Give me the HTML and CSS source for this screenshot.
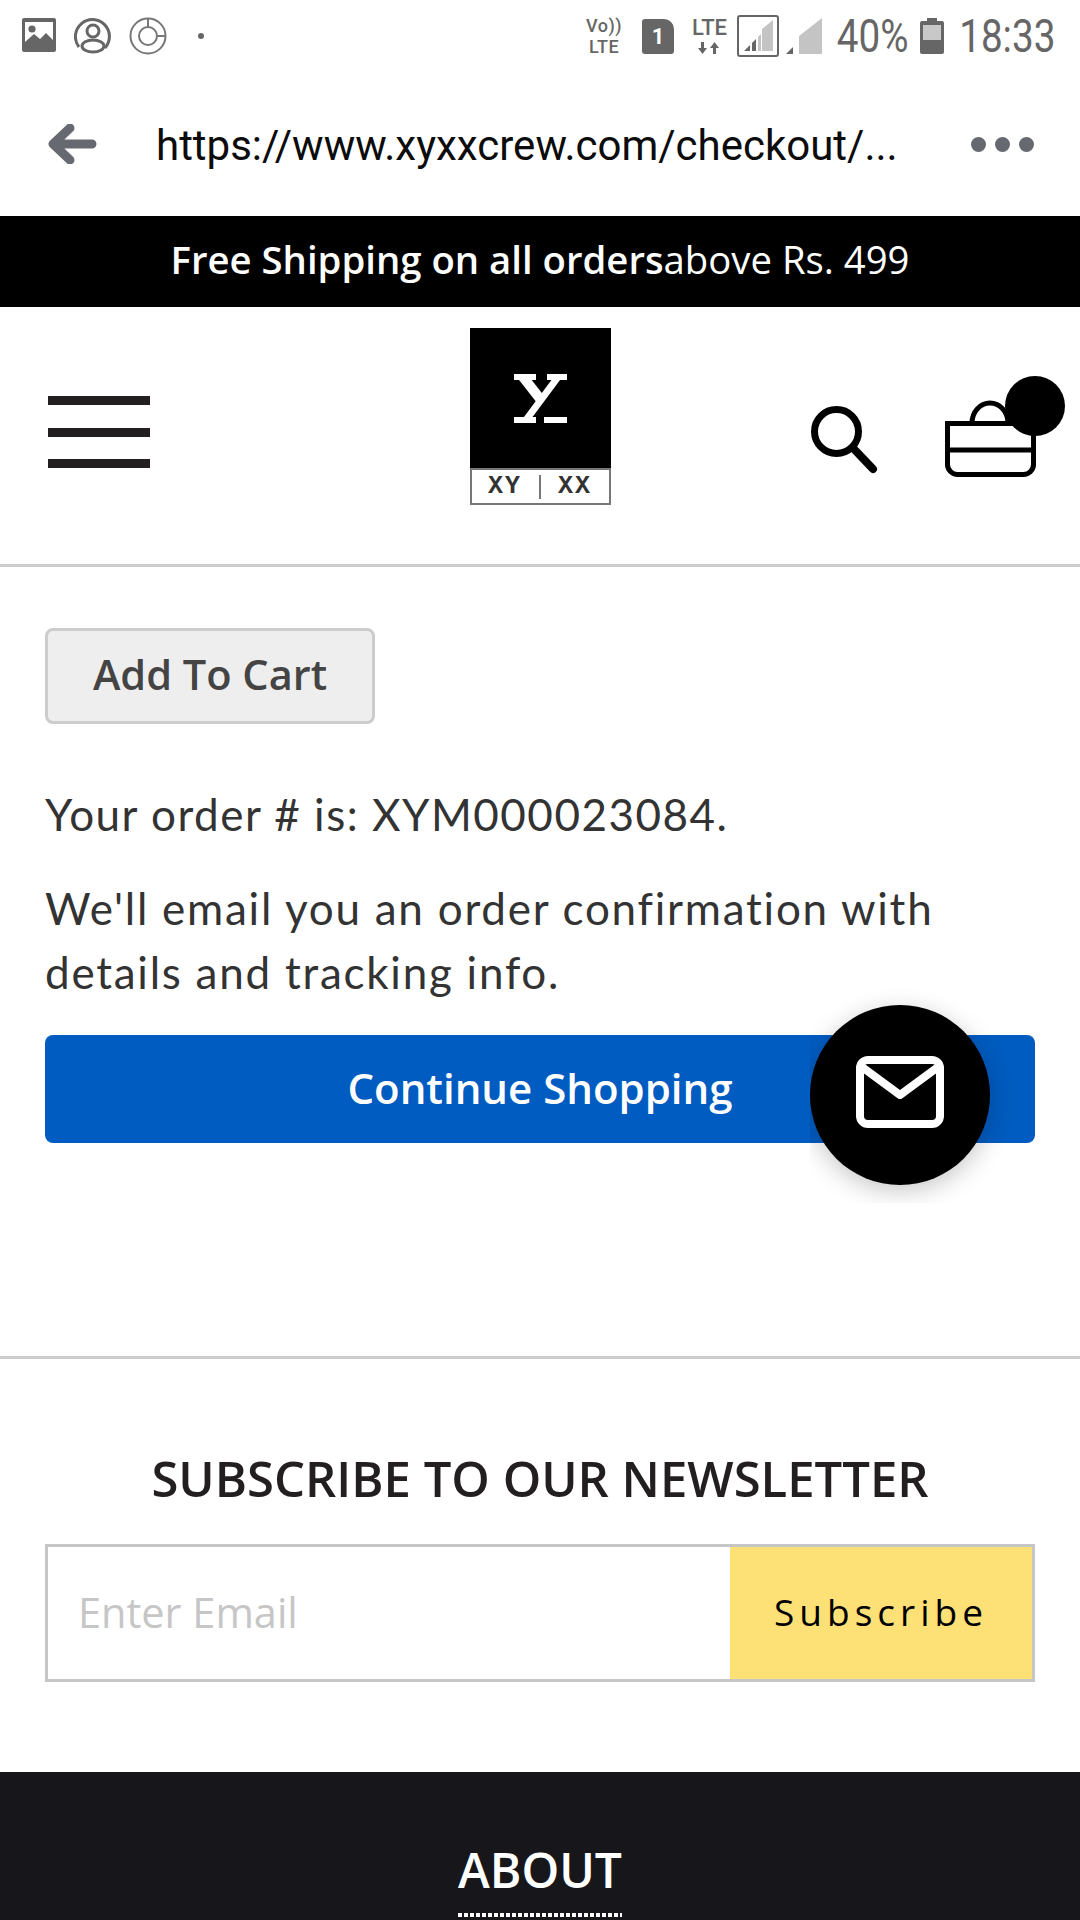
FILE: index.html
```html
<!DOCTYPE html>
<html lang="en">
<head>
  <meta charset="UTF-8" />
  <title>Checkout | XYXX</title>
  <meta name="viewport" content="width=device-width, initial-scale=1.0" />
  <link rel="stylesheet" href="styles.css">
</head>
<body>

  <!-- Android status bar -->
  <div class="status-bar">
    <div class="status-left">
      <svg class="st-icon" width="36" height="36" viewBox="0 0 36 36">
        <path fill="#666" fill-rule="evenodd" d="M3 0h30a2 2 0 0 1 2 2v30a2 2 0 0 1-2 2H3a2 2 0 0 1-2-2V2a2 2 0 0 1 2-2zM4 4v20l9-8 6 5 6-6 7 7V4z"/>
        <circle cx="11" cy="11" r="3.6" fill="#666"/>
      </svg>
      <svg class="st-icon" width="38" height="38" viewBox="0 0 38 38" fill="none" stroke="#666" stroke-width="3">
        <path d="M5 30A17 17 0 1 1 31 31"/>
        <circle cx="19" cy="14" r="6"/>
        <ellipse cx="19" cy="29" rx="11" ry="6"/>
      </svg>
      <svg class="st-icon" width="38" height="38" viewBox="0 0 38 38" fill="none" stroke="#777" stroke-width="2">
        <circle cx="19" cy="19" r="17.5"/>
        <circle cx="19" cy="19" r="9"/>
        <path d="M19 2v8M28 19h9"/>
      </svg>
      <span class="st-dot"></span>
    </div>
    <div class="status-right">
      <div class="volte"><span>Vo))</span><span>LTE</span></div>
      <div class="sim">1</div>
      <div class="lte">
        <span>LTE</span>
        <svg width="24" height="12" viewBox="0 0 24 12" fill="#666">
          <path d="M3 0h3v6h3l-4.500 6L0 6h3zM18 12h-3V6h-3l4.500-6L21 6h-3z"/>
        </svg>
      </div>
      <svg class="signal-1" width="42" height="42" viewBox="0 0 42 42">
        <rect x="1" y="1" width="40" height="40" rx="2" fill="#fff" stroke="#666" stroke-width="2"/>
        <path fill="#c4c4c4" d="M25 36V14L36 5v31z"/>
        <path fill="#666" d="M7 36l6-6v6zM15 36v-8l4-4v12z"/>
        <path fill="#c4c4c4" d="M21 36V22l3-3v17z"/>
      </svg>
      <svg class="signal-2" width="36" height="36" viewBox="0 0 36 36">
        <path fill="#c4c4c4" d="M13 36V18L36 0v36z"/>
        <path fill="#666" d="M0 36l7-7v7z"/>
      </svg>
      <span class="st-text st-battery-pct">40%</span>
      <svg class="battery" width="24" height="36" viewBox="0 0 24 36">
        <path fill="#666" d="M7 0h10v3h5a2 2 0 0 1 2 2v29a2 2 0 0 1-2 2H2a2 2 0 0 1-2-2V5a2 2 0 0 1 2-2h5z"/>
        <rect x="3" y="7" width="18" height="15" fill="#c8c8c8"/>
      </svg>
      <span class="st-text st-clock">18:33</span>
    </div>
  </div>

  <!-- Browser address bar -->
  <div class="url-bar">
    <svg class="back-arrow" width="50" height="40" viewBox="0 0 50 40" fill="none" stroke="#666a70" stroke-width="9" stroke-linecap="round" stroke-linejoin="round">
      <path d="M45 20H6M23 4L6 20l17 16"/>
    </svg>
    <div class="url-text">https://www.xyxxcrew.com/checkout/...</div>
    <div class="url-menu"><span></span><span></span><span></span></div>
  </div>

  <div class="promo-strip"><strong>Free Shipping on all orders</strong>above Rs. 499</div>

  <header class="site-header">
    <div class="burger"><span></span><span></span><span></span></div>
    <div class="logo">
      <div class="logo-top">
        <svg width="53" height="49" viewBox="0 0 53 49" fill="none" stroke="#fff">
          <path stroke-width="6" d="M0 3h22M33 3h20M0 46h22M30 46h23"/>
          <path stroke-width="10" d="M9 3l18 23"/>
          <path stroke-width="7" d="M44 3L12 46"/>
        </svg>
      </div>
      <div class="logo-bottom"><span>XY</span><i></i><span>XX</span></div>
    </div>
    <div class="header-icons">
      <svg class="search-icon" width="68" height="68" viewBox="0 0 68 68" fill="none" stroke="#000" stroke-width="7" stroke-linecap="round">
        <circle cx="25.500" cy="25.500" r="22"/>
        <path d="M42 42l20 21" stroke-width="8"/>
      </svg>
      <div class="cart">
        <svg width="91" height="78" viewBox="0 0 91 78" fill="none" stroke="#000" stroke-width="5">
          <path d="M2.500 23.500h86v41a10 10 0 0 1-10 10h-66a10 10 0 0 1-10-10zM2.500 50h86M27 23A18 20 0 0 1 63 23"/>
        </svg>
        <span class="cart-badge"></span>
      </div>
    </div>
  </header>

  <main class="content">
    <button class="btn-add">Add To Cart</button>
    <p class="order-line">Your order # is: XYM000023084.</p>
    <p class="order-note">We'll email you an order confirmation with details and tracking info.</p>
    <div class="continue-wrap">
      <button class="btn-continue">Continue Shopping</button>
      <div class="chat-frame">
        <button class="chat-fab" title="Message">
          <svg width="88" height="72" viewBox="0 0 88 72" fill="none" stroke="#fff" stroke-width="8" stroke-linejoin="round" stroke-linecap="round">
            <rect x="4" y="4" width="80" height="64" rx="8"/>
            <path d="M6 11l38 28 38-28"/>
          </svg>
        </button>
      </div>
    </div>
  </main>

  <section class="newsletter">
    <h2>SUBSCRIBE TO OUR NEWSLETTER</h2>
    <form class="sub-form">
      <input class="sub-input" type="text" placeholder="Enter Email">
      <button class="sub-btn" type="button">Subscribe</button>
    </form>
  </section>

  <footer class="site-footer">
    <h3>ABOUT</h3>
  </footer>

</body>
</html>
```

FILE: styles.css
```css
html, body {
  height: 1920px;
  overflow: hidden;
}

body {
  margin: 0;
  background: #fff;
  font-family: "Open Sans", sans-serif;
  color: #231f20;
}

/* --- status bar --- */
.status-bar {
  height: 72px;
  display: flex;
  justify-content: space-between;
  align-items: center;
  padding: 0 24px 0 21px;
}
.status-left {
  display: flex;
  align-items: center;
  gap: 17px;
}
.st-dot {
  width: 6px;
  height: 6px;
  margin-left: 14px;
  border-radius: 50%;
  background: #666;
}
.status-right {
  display: flex;
  align-items: center;
  color: #666;
  font-family: Roboto, sans-serif;
}
.volte {
  display: flex;
  flex-direction: column;
  align-items: center;
  font-size: 18px;
  font-weight: 500;
  line-height: 21px;
  letter-spacing: 0.5px;
  margin-right: 20px;
}
.sim {
  width: 32px;
  height: 35px;
  margin-right: 18px;
  background: #666;
  color: #fff;
  border-radius: 3px 10px 3px 3px;
  font-size: 22px;
  font-weight: 700;
  line-height: 35px;
  text-align: center;
}
.lte {
  display: flex;
  flex-direction: column;
  align-items: center;
  gap: 4px;
  font-size: 22px;
  font-weight: 500;
  line-height: 20px;
  margin-right: 10px;
}
.signal-2 {
  margin-left: 7px;
}
.st-text {
  font-size: 46px;
  line-height: 48px;
  transform: scaleX(0.84);
}
.st-battery-pct {
  margin: 0 -8px 0 8px;
}
.st-clock {
  margin: 0 -9px;
}
.battery {
  margin: 0 15px 0 13px;
}

/* --- address bar --- */
.url-bar {
  height: 144px;
  display: flex;
  align-items: center;
  padding: 0 46px 0 47px;
}
.back-arrow {
  flex: none;
  margin-right: 59px;
}
.url-text {
  flex: 1;
  padding-top: 2px;
  font-family: Roboto, sans-serif;
  font-size: 42px;
  color: #0c0c0c;
  white-space: nowrap;
}
.url-menu {
  display: flex;
  gap: 9px;
}
.url-menu span {
  width: 15px;
  height: 15px;
  border-radius: 50%;
  background: #666a70;
}

/* --- promo --- */
.promo-strip {
  height: 91px;
  line-height: 87px;
  background: #000;
  color: #fff;
  text-align: center;
  font-size: 38.300px;
}
.promo-strip strong {
  font-weight: 600;
}

/* --- header --- */
.site-header {
  height: 260px;
  box-sizing: border-box;
  border-bottom: 3px solid #ccc;
  display: grid;
  grid-template-columns: 1fr auto 1fr;
  padding: 0 44px;
}
.burger {
  width: 102px;
  height: 72px;
  margin: 89px 0 0 4px;
  display: flex;
  flex-direction: column;
  justify-content: space-between;
}
.burger span {
  height: 9px;
  background: #231f20;
}
.logo {
  width: 141px;
  height: 177px;
  margin-top: 21px;
  display: flex;
  flex-direction: column;
}
.logo-top {
  height: 140px;
  background: #000;
  display: flex;
  justify-content: center;
  align-items: center;
}
.logo-bottom {
  flex: 1;
  border: 2px solid #777;
  display: flex;
  align-items: center;
  justify-content: center;
  gap: 17px;
  font-family: "Liberation Mono", monospace;
  font-weight: 700;
  font-size: 25px;
  letter-spacing: 2px;
  color: #333;
}
.logo-bottom i {
  width: 2px;
  height: 24px;
  background: #777;
}
.header-icons {
  display: flex;
  justify-content: flex-end;
  align-items: flex-start;
  gap: 66px;
}
.search-icon {
  margin-top: 99px;
}
.cart {
  position: relative;
  margin-top: 93px;
  width: 91px;
}
.cart-badge {
  position: absolute;
  top: -24px;
  left: 60px;
  width: 60px;
  height: 60px;
  border-radius: 50%;
  background: #000;
}

/* --- order content --- */
.content {
  padding: 61px 45px 0;
  height: 792px;
  box-sizing: border-box;
  border-bottom: 3px solid #ccc;
}
.btn-add {
  display: block;
  width: 330px;
  height: 96px;
  padding: 0 0 4px;
  background: #eee;
  border: 3px solid #ccc;
  border-radius: 8px;
  font-family: "Open Sans", sans-serif;
  font-size: 41.500px;
  font-weight: 600;
  color: #444;
}
.order-line,
.order-note {
  margin: 0;
  font-family: Lato, sans-serif;
  font-size: 44px;
  line-height: 64px;
  color: #333;
}
.order-line {
  margin-top: 58px;
  letter-spacing: 1.500px;
}
.order-note {
  margin-top: 30px;
  letter-spacing: 1.750px;
}
.continue-wrap {
  position: relative;
  margin-top: 31px;
}
.btn-continue {
  display: block;
  width: 100%;
  height: 108px;
  padding: 0 0 4px;
  background: #005cc0;
  border: none;
  border-radius: 8px;
  color: #fff;
  font-family: "Open Sans", sans-serif;
  font-size: 42px;
  font-weight: 600;
}
/* shadow of the floating button is cut off at its left edge, as on the site */
.chat-frame {
  position: absolute;
  top: -60px;
  right: -25px;
  width: 250px;
  height: 228px;
  overflow: hidden;
}
.chat-fab {
  display: flex;
  justify-content: center;
  align-items: center;
  width: 180px;
  height: 180px;
  margin-top: 30px;
  border: none;
  padding: 0 0 7px;
  border-radius: 50%;
  background: #000;
  box-shadow: 0 6px 24px rgba(0,0,0,0.22);
}

/* --- newsletter --- */
.newsletter {
  height: 413px;
  box-sizing: border-box;
  padding: 89px 45px 0;
}
.newsletter h2 {
  margin: 0;
  text-align: center;
  font-size: 49px;
  font-weight: 600;
  line-height: 60px;
  color: #231f20;
}
.sub-form {
  display: flex;
  height: 138px;
  margin-top: 36px;
}
.sub-input {
  flex: 1;
  min-width: 0;
  box-sizing: border-box;
  border: 3px solid #c6c6c6;
  border-right: none;
  padding: 0 30px 2px;
  font-family: "Open Sans", sans-serif;
  font-size: 41.500px;
  outline: none;
}
.sub-input::placeholder {
  color: #c6c6c6;
}
.sub-btn {
  width: 305px;
  box-sizing: border-box;
  padding: 0 0 4px;
  background: #fde177;
  border: 3px solid #c6c6c6;
  border-left: none;
  font-family: "Open Sans", sans-serif;
  font-size: 37px;
  letter-spacing: 5px;
  color: #000;
}

/* --- footer --- */
.site-footer {
  height: 148px;
  background: #17171b;
  padding-top: 70px;
  box-sizing: border-box;
  text-align: center;
}
.site-footer h3 {
  display: inline-block;
  margin: 0;
  color: #fff;
  font-size: 48px;
  font-weight: 600;
  line-height: 56px;
}
.site-footer h3::after {
  content: "";
  display: block;
  height: 4px;
  margin-top: 15px;
  background: repeating-linear-gradient(to right, #fff 0 4px, transparent 4px 6px);
}
```
